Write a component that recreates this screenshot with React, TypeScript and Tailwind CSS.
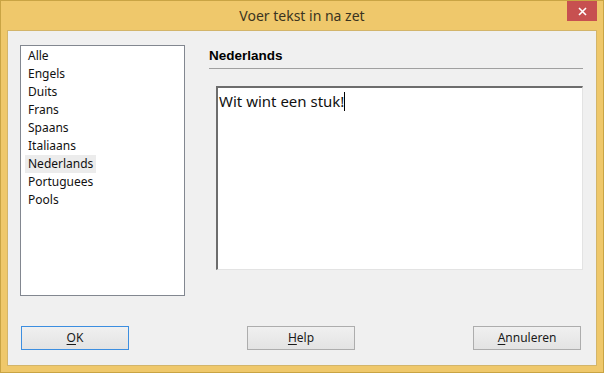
const languages = [
  "Alle",
  "Engels",
  "Duits",
  "Frans",
  "Spaans",
  "Italiaans",
  "Nederlands",
  "Portuguees",
  "Pools",
];

function DialogButton({
  mnemonic,
  rest,
  focused,
}: {
  mnemonic: string;
  rest: string;
  focused?: boolean;
}) {
  return (
    <button
      className={
        "w-[108px] h-[24px] flex items-center justify-center text-[12px] text-[#1a1a1a] bg-gradient-to-b from-[#f0f0f0] to-[#e3e3e3] border " +
        (focused ? "border-[#3c8ee0]" : "border-[#adadad]")
      }
    >
      <span>
        <span className="underline underline-offset-2">{mnemonic}</span>
        {rest}
      </span>
    </button>
  );
}

export default function App() {
  const selected = "Nederlands";

  return (
    <div
      className="w-[604px] h-[373px] bg-[#efc86b] border border-[#c9a444] flex flex-col"
      style={{ fontFamily: '"Noto Sans", "Open Sans", sans-serif' }}
    >
      {/* title bar */}
      <div className="relative h-[29px] flex items-center justify-center">
        <span className="text-[14px] text-[#3b3420] -mt-[1px]">Voer tekst in na zet</span>
        <div className="absolute right-[6px] top-0 w-[30px] h-[20px] bg-[#c75050] flex items-center justify-center">
          <svg width="9" height="9" viewBox="0 0 9 9">
            <path d="M1 1 L8 8 M8 1 L1 8" stroke="white" strokeWidth="1.6" />
          </svg>
        </div>
      </div>

      {/* client area */}
      <div className="mx-[6px] mb-[6px] flex-1 border border-[#d3b56a] bg-[#f0f0f0] flex flex-col pt-[14px] pb-[15px]">
        <div className="flex">
          <div className="ml-[12px] w-[165px] h-[251px] bg-white border border-[#828790] pt-[1px] pl-[4px]">
            {languages.map((lang) => (
              <div
                key={lang}
                className={
                  "h-[18px] leading-[18px] text-[12px] text-[#111] px-[3px] w-fit " +
                  (lang === selected ? "bg-[#ececec]" : "")
                }
              >
                {lang}
              </div>
            ))}
          </div>

          <div className="ml-[24px] w-[374px] flex flex-col">
            <div
              className="h-[22px] flex items-center text-[13.5px] font-bold text-black"
              style={{ fontFamily: '"Liberation Sans", Arial, sans-serif' }}
            >
              Nederlands
            </div>
            <div className="h-px bg-[#a0a0a0] mt-[1px]" />
            <div className="ml-[7px] mt-[17px] h-[184px] bg-white border-t-2 border-l-2 border-t-[#6d6d6d] border-l-[#6d6d6d] border-r border-b border-r-[#e3e3e3] border-b-[#e3e3e3] pl-[1px] pt-[1px]">
              <span className="text-[15px] text-[#111] leading-[20px]">Wit wint een stuk!</span>
              <span className="inline-block w-px h-[19px] bg-black align-middle -mt-[2px]" />
            </div>
          </div>
        </div>

        <div className="mt-auto flex justify-between pl-[13px] pr-[15px]">
          <DialogButton mnemonic="O" rest="K" focused />
          <DialogButton mnemonic="H" rest="elp" />
          <DialogButton mnemonic="A" rest="nnuleren" />
        </div>
      </div>
    </div>
  );
}
